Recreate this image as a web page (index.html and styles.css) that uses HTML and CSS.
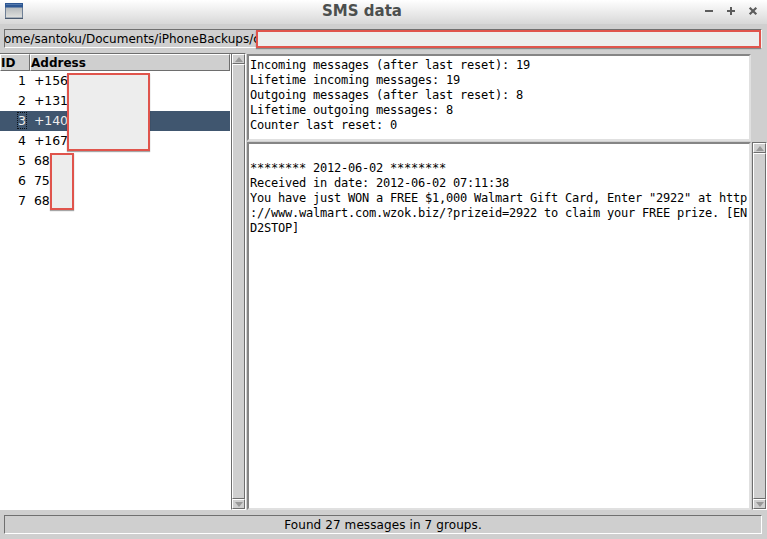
FILE: index.html
```
<!DOCTYPE html>
<html lang="en">
<head>
<meta charset="utf-8">
<title>SMS data</title>
<link rel="stylesheet" href="styles.css">
</head>
<body>
<div class="window">
  <header class="titlebar">
    <svg class="app-icon" width="18" height="17" viewBox="0 0 18 17">
      <defs><linearGradient id="g" x1="0" y1="0" x2="0" y2="1"><stop offset="0" stop-color="#a3aab0"/><stop offset="1" stop-color="#e2e2df"/></linearGradient></defs>
      <rect x="0.5" y="0.5" width="17" height="14.5" fill="url(#g)" stroke="#6f8096"/>
      <rect x="0" y="0" width="18" height="4.5" fill="#2d5793"/>
      <rect x="1" y="1" width="16" height="1" fill="#5479ad"/>
      <rect x="0" y="15" width="18" height="1" fill="#4a5a70"/>
    </svg>
    <h1 class="title">SMS data</h1>
    <svg class="controls" width="54" height="10" viewBox="0 0 54 10">
      <path d="M0 5H8M22 5H30M26 1V9" stroke="#5c5c5c" stroke-width="2" fill="none"/>
      <path d="M44.7 1.7L51.3 8.3M51.3 1.7L44.7 8.3" stroke="#5c5c5c" stroke-width="2.2" fill="none"/>
    </svg>
  </header>
  <div class="path-row">
    <div class="field path"><span>ome/santoku/Documents/iPhoneBackups/c</span><i class="mask mask-path"></i></div>
  </div>
  <main class="main">
    <section class="tree">
      <div class="row head"><div class="th id">ID</div><div class="th address">Address</div></div>
      <div class="row"><b>1</b><span>+156</span></div>
      <div class="row"><b>2</b><span>+131</span></div>
      <div class="row selected"><b><i class="focus">3</i></b><span>+140</span></div>
      <div class="row"><b>4</b><span>+167</span></div>
      <div class="row"><b>5</b><span>68</span></div>
      <div class="row"><b>6</b><span>75</span></div>
      <div class="row"><b>7</b><span>68</span></div>
      <i class="mask mask-phones"></i>
      <i class="mask mask-codes"></i>
    </section>
    <div class="scrollbar">
      <div class="arrow"><svg width="8" height="5" viewBox="0 0 8 5"><path d="M0 5L4 0L8 5Z" fill="#999"/></svg></div>
      <div class="thumb"></div>
      <div class="arrow"><svg width="8" height="5" viewBox="0 0 8 5"><path d="M0 0L4 5L8 0Z" fill="#999"/></svg></div>
    </div>
    <section class="right">
<pre class="text stats">Incoming messages (after last reset): 19
Lifetime incoming messages: 19
Outgoing messages (after last reset): 8
Lifetime outgoing messages: 8
Counter last reset: 0</pre>
      <div class="messages">
<pre class="text body">

******** 2012-06-02 ********
Received in date: 2012-06-02 07:11:38
You have just WON a FREE $1,000 Walmart Gift Card, Enter "2922" at http
://www.walmart.com.wzok.biz/?prizeid=2922 to claim your FREE prize. [EN
D2STOP]</pre>
        <div class="scrollbar">
          <div class="arrow"><svg width="8" height="5" viewBox="0 0 8 5"><path d="M0 5L4 0L8 5Z" fill="#999"/></svg></div>
          <div class="thumb"></div>
          <div class="arrow"><svg width="8" height="5" viewBox="0 0 8 5"><path d="M0 0L4 5L8 0Z" fill="#999"/></svg></div>
        </div>
      </div>
    </section>
  </main>
  <footer class="status-row"><div class="field status"><span>Found 27 messages in 7 groups.</span></div></footer>
</div>
</body>
</html>
```

FILE: styles.css
```
* { box-sizing: border-box; }
body { margin: 0; background: #cfcfcf; color: #000; font: 12.5px "DejaVu Sans", sans-serif; }
.window { width: 767px; height: 539px; display: flex; flex-direction: column; overflow: hidden; background: #cfcfcf; }
.titlebar { height: 24px; flex: none; display: grid; grid-template-columns: 62px 1fr 62px; background: linear-gradient(#fff, #d8d8d8); }
.app-icon { margin: 3px 0 0 5px; }
.title { margin: 0; text-align: center; font-size: 15px; line-height: 23px; color: #4c4f4e; padding-right: 43px; }
.controls { margin: 6px 0 0 0; }
.path-row { height: 29px; flex: none; padding: 5px 4px 0; }
.field { position: relative; height: 19px; border: 1px solid; border-color: #707070 #fff #fff #707070; white-space: nowrap; line-height: 18px; font-size: 12px; }
.path { width: 758px; }
.path span { margin-left: -1px; }
.mask { position: absolute; background: #ededed; border: 2px solid #e0544c; box-shadow: 0 1px 1px rgba(0,0,0,.35); }
.mask-path { left: 251px; top: 0; width: 505px; height: 18px; }
.main { height: 457px; flex: none; display: flex; }
.tree { position: relative; width: 231px; background: #fff; border-top: 1px solid #6e6e6e; }
.row { display: flex; height: 20px; line-height: 20px; }
.row b { width: 26px; text-align: right; font-weight: 400; }
.row span { margin-left: 8px; letter-spacing: -0.1px; }
.row.head { height: 17px; line-height: 16px; font-weight: 700; font-size: 12px; }
.th { background: #cfcfcf; border: 1px solid; border-color: #fff #6e6e6e #6e6e6e #fff; }
.th.id { width: 30px; }
.th.address { width: 200px; }
.selected { width: 230px; background: #40566f; color: #eee; }
.focus { font-style: normal; outline: 1px dotted #0c1218; }
.mask-phones { left: 67px; top: 19px; width: 83px; height: 78px; }
.mask-codes { left: 50px; top: 99px; width: 24px; height: 57px; }
.scrollbar { width: 15px; flex: none; display: flex; flex-direction: column; background: #cfcfcf; border: 1px solid; border-color: #6e6e6e #fff #fff #6e6e6e; }
.arrow { height: 10px; flex: none; display: flex; align-items: center; justify-content: center; border: 1px solid; border-color: #fff #6e6e6e #6e6e6e #fff; }
.thumb { flex: 1; border: 1px solid; border-color: #fff #6e6e6e #6e6e6e #fff; }
.right { flex: 1; display: flex; flex-direction: column; padding: 1px 0 0 1px; }
.text { margin: 0; width: 504px; background: #fff; color: #000; border: 2px solid; border-color: #858585 #e0e0e0 #e0e0e0 #858585; padding: 2px 1px 1px; font: 12px/15px "DejaVu Sans Mono", monospace; letter-spacing: -0.224px; }
.stats { height: 87px; }
.messages { flex: 1; display: flex; padding-top: 1px; }
.body { height: 368px; }
.messages .scrollbar { margin-left: 1px; width: 15px; }
.status-row { height: 29px; flex: none; padding: 5px 4px 0; }
.status { width: 758px; text-align: center; letter-spacing: 0.1px; }
```
